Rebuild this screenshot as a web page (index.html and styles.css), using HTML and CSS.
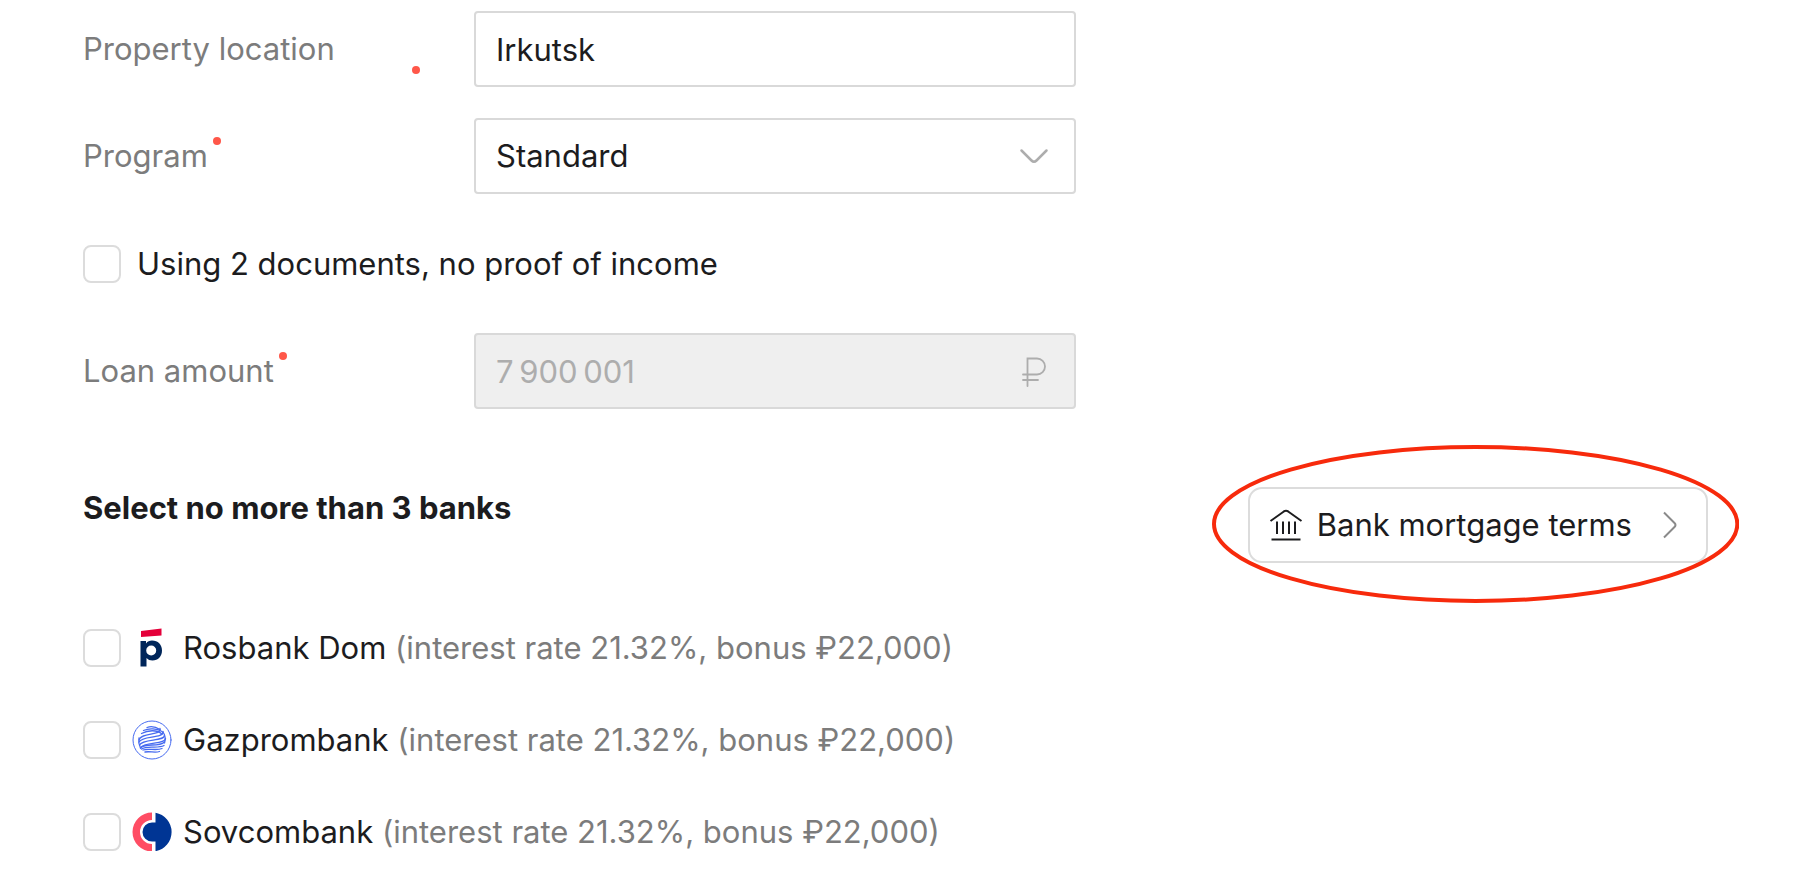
FILE: index.html
```html
<!DOCTYPE html>
<html lang="en">
<head>
  <meta charset="UTF-8">
  <meta name="viewport" content="width=device-width, initial-scale=1.0">
  <title>Mortgage application</title>
  <link rel="stylesheet" href="styles.css">
</head>
<body>

<form class="mortgage-form">
  <div class="form-row">
    <label class="field-label wide" for="location">Property location<span class="required"></span></label>
    <div class="field">
      <input type="text" id="location" value="Irkutsk">
    </div>
  </div>

  <div class="form-row">
    <label class="field-label" for="program">Program<span class="required"></span></label>
    <div class="field">
      <select id="program">
        <option>Standard</option>
      </select>
      <svg class="field-icon" viewBox="0 0 32 32" aria-hidden="true">
        <path d="M3.5 10.5 13.5 20.500Q16 23 18.500 20.500L28.500 10.500" stroke-width="2.500"/>
      </svg>
    </div>
  </div>

  <label class="check-row">
    <input type="checkbox">
    <span>Using 2 documents, no proof of income</span>
  </label>

  <div class="form-row">
    <label class="field-label" for="amount">Loan amount<span class="required"></span></label>
    <div class="field">
      <input type="text" id="amount" value="7&thinsp;900&thinsp;001" disabled>
      <svg class="field-icon" viewBox="0 0 32 32" aria-hidden="true">
        <path d="M9.500 31V3.500H19a8 8 0 0 1 0 16H5M5 25H20" stroke-width="1.800"/>
      </svg>
    </div>
  </div>

  <div class="banks-header">
    <h2>Select no more than 3 banks</h2>
    <div class="terms">
      <button type="button" class="terms-button">
        <svg class="bank-icon" viewBox="0 0 34 34" aria-hidden="true">
          <path d="M1.500 13 14.500 3.700Q17 2 19.500 3.700L32.500 13M8 13.500V26M14 13.500V26M20 13.500V26M26 13.500V26M2.500 31.500H31.500"/>
        </svg>
        Bank mortgage terms
        <svg class="arrow-icon" viewBox="0 0 16 30" aria-hidden="true">
          <path d="M2 2.500 12.500 13Q14.500 15 12.500 17L2 27.500"/>
        </svg>
      </button>
      <svg class="highlight" viewBox="0 0 528 158" preserveAspectRatio="none" aria-hidden="true">
        <ellipse cx="264" cy="79" rx="262" ry="77"/>
      </svg>
    </div>
  </div>

  <div class="bank-list">
    <label class="bank-row">
      <input type="checkbox">
      <svg class="bank-logo" viewBox="0 0 40 40" aria-hidden="true">
        <path fill="#e4003a" d="M9 3 29.500.5V7.500L9 9z"/>
        <path fill="#00265a" fill-rule="evenodd" d="M8.500 13H14v2.500C15.600 13.300 17.500 12.500 20 12.500c6 0 10 4 10 10s-4 10-9.500 10c-2.600 0-4.500-.8-6-2.500v8.500h-6zM19.200 17.500a5 5 0 1 0 0 10a5 5 0 1 0 0-10z"/>
      </svg>
      <span>Rosbank Dom <span class="rate">(interest rate 21.32%, bonus ₽22,000)</span></span>
    </label>

    <label class="bank-row">
      <input type="checkbox">
      <svg class="bank-logo" viewBox="0 0 40 40" aria-hidden="true">
        <g fill="none" stroke="#476bf0" stroke-linecap="round">
          <circle cx="20" cy="20" r="19" stroke-width="1"/>
          <g stroke-width="1.300">
            <path d="M15 7.500C19 6 24 7 28 9.500"/>
            <path d="M11.500 10.500C17 8 25 8.500 30 11.500"/>
            <path d="M9.500 13.500C16 10 25 9.500 30 14"/>
            <path d="M7 20C9 12 30 16 28 8.500"/>
            <path d="M7 22C10 15 32 19 31 11.500"/>
            <path d="M7.500 25C11 18 33 22 32.500 15"/>
            <path d="M8.500 28C12 21 33 25 33.500 18.500"/>
            <path d="M32.500 22C26 28 14 22 8.500 28"/>
            <path d="M32 25.500C26 29 15 25 9.500 29"/>
            <path d="M30 28.500C25 31 16 28 11 30"/>
            <path d="M27.500 31.500C23 33 18 31 13 32"/>
            <path d="M7 18Q6 23 8.500 28M31 12Q34.500 17 32.500 23"/>
          </g>
        </g>
      </svg>
      <span>Gazprombank <span class="rate">(interest rate 21.32%, bonus ₽22,000)</span></span>
    </label>

    <label class="bank-row">
      <input type="checkbox">
      <svg class="bank-logo" viewBox="0 0 40 40" aria-hidden="true">
        <path fill="#ff4d64" d="M20 .5V8A12 12 0 0 0 20 32V39.500A19.500 19.500 0 0 1 20 .5z"/>
        <path fill="#003594" d="M23.500.8A19.500 19.500 0 0 1 23.500 39.200V29.500H20a9.500 9.500 0 0 1 0-19H23.500z"/>
      </svg>
      <span>Sovcombank <span class="rate">(interest rate 21.32%, bonus ₽22,000)</span></span>
    </label>
  </div>
</form>

</body>
</html>
```
FILE: styles.css
```css
* {
  box-sizing: border-box;
}
body {
  margin: 0;
  background-color: #fff;
  color: #1c1c1e;
  font-family: Inter, "Liberation Sans", sans-serif;
  font-size: 31px;
  line-height: 38px;
}
.mortgage-form {
  display: flex;
  flex-direction: column;
  gap: 31px;
  padding: 11px 92px 0 83px;
}
.form-row {
  display: grid;
  grid-template-columns: 391px minmax(0, 602px);
  align-items: center;
}
.field-label {
  display: flex;
  align-items: center;
  justify-self: start;
  gap: 5px;
  color: #7c7c7c;
}
.field-label.wide {
  justify-content: space-between;
  width: 337px;
  min-height: 50px;
}
.required {
  align-self: flex-start;
  width: 8px;
  height: 8px;
  border-radius: 50%;
  background-color: #ff5749;
}
.wide .required {
  align-self: flex-end;
}
.field {
  position: relative;
}
.field input, .field select {
  display: block;
  width: 100%;
  height: 76px;
  padding: 0 20px;
  border: 2px solid #d9d9d9;
  border-radius: 4px;
  background-color: #fff;
  color: inherit;
  font: inherit;
  appearance: none;
}
.field select {
  padding-right: 70px;
}
.field input:disabled {
  background-color: #efefef;
  color: #adadad;
}
.field-icon {
  position: absolute;
  top: 22px;
  right: 26px;
  width: 32px;
  height: 32px;
  fill: none;
  stroke: #adadad;
  stroke-linecap: round;
  pointer-events: none;
}
input[type="checkbox"] {
  flex: none;
  width: 38px;
  height: 38px;
  margin: 0;
  border: 2px solid #dcdcdc;
  border-radius: 8px;
  background-color: #fff;
  appearance: none;
}
input[type="checkbox"]:checked {
  background-color: #476bf0;
}
.check-row {
  display: flex;
  align-items: center;
  gap: 16px;
  min-height: 77px;
}
.banks-header {
  display: flex;
  justify-content: space-between;
  align-items: flex-start;
  padding-top: 47px;
}
h2 {
  margin: 2px 0 0;
  font-size: 31px;
  line-height: 38px;
  font-weight: 700;
}
.terms {
  position: relative;
}
.terms-button {
  display: flex;
  align-items: center;
  height: 76px;
  padding: 0 28px 0 19px;
  border: 2px solid #dcdcdc;
  border-radius: 14px;
  background-color: #fff;
  color: inherit;
  font: inherit;
  cursor: pointer;
}
.bank-icon {
  width: 34px;
  height: 34px;
  margin-right: 14px;
  fill: none;
  stroke: #1c1c1e;
  stroke-width: 2;
}
.arrow-icon {
  width: 16px;
  height: 30px;
  margin-left: 30px;
  fill: none;
  stroke: #8a8a8a;
  stroke-width: 2;
}
/* red mark drawn round the button */
.highlight {
  position: absolute;
  top: -42px;
  left: -36px;
  width: calc(100% + 67px);
  height: 158px;
  fill: none;
  stroke: #f72a0c;
  stroke-width: 4;
  pointer-events: none;
}
.bank-list {
  display: flex;
  flex-direction: column;
  gap: 54px;
  padding-top: 35px;
}
.bank-row {
  display: flex;
  align-items: center;
}
.bank-logo {
  flex: none;
  width: 40px;
  height: 40px;
  margin: -1px 11px;
}
.rate {
  color: #7c7c7c;
}
```
